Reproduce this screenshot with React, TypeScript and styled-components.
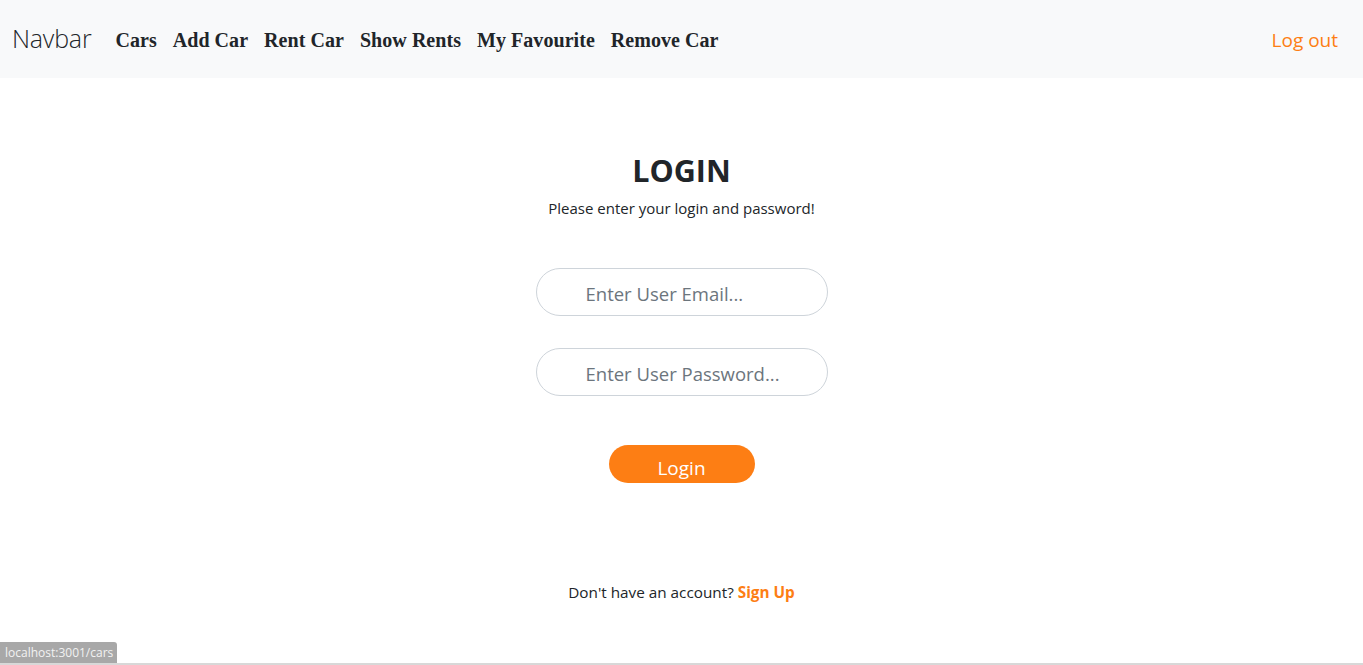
import React from 'react';
import styled, { createGlobalStyle } from 'styled-components';

const GlobalStyle = createGlobalStyle`
  html, body {
    margin: 0;
    padding: 0;
    background: #fff;
    font-family: "Open Sans", "Noto Sans", sans-serif;
    color: #212529;
  }
  * { box-sizing: border-box; }
`;

const Page = styled.div`
  min-height: 665px;
  display: flex;
  flex-direction: column;
`;

const NavBar = styled.nav`
  height: 78px;
  background-color: #f8f9fa;
  display: flex;
  align-items: center;
  padding: 0 25px 0 12px;
`;

const Brand = styled.a`
  font-family: "Open Sans", sans-serif;
  font-size: 25px;
  font-weight: 300;
  color: #212529;
  margin-right: 24px;
  letter-spacing: -0.2px;
  padding-bottom: 2px;
`;

const NavList = styled.div`
  display: flex;
  gap: 16px;
  flex: 1;
  padding-top: 3px;
`;

const NavLink = styled.a`
  font-family: "Liberation Serif", "DejaVu Serif", serif;
  font-weight: bold;
  font-size: 20px;
  letter-spacing: 0.05px;
  color: #212529;
`;

const LogOut = styled.a`
  font-family: "Open Sans", sans-serif;
  font-size: 19px;
  color: #fd7e14;
  padding-top: 2px;
`;

const Main = styled.main`
  display: flex;
  flex-direction: column;
  align-items: center;
  padding-top: 72px;
`;

const Title = styled.h2`
  margin: 0;
  font-size: 30.5px;
  font-weight: 700;
  line-height: 40px;
  color: #212529;
`;

const Subtitle = styled.p`
  margin: 7px 0 0;
  font-size: 15px;
  line-height: 22px;
`;

const Form = styled.form`
  display: flex;
  flex-direction: column;
  align-items: center;
  gap: 32px;
  margin-top: 49px;
`;

const Input = styled.input`
  width: 292px;
  height: 48px;
  border: 1px solid #ced4da;
  border-radius: 24px;
  padding: 3px 20px 0 49px;
  font-family: "Open Sans", sans-serif;
  font-size: 18.5px;
  color: #495057;
  background: #fff;
  &::placeholder {
    color: #6c757d;
  }
`;

const LoginButton = styled.button`
  margin-top: 17px;
  width: 146px;
  height: 38px;
  border: none;
  border-radius: 19px;
  background-color: #fd7e14;
  color: #fff;
  font-family: "Open Sans", sans-serif;
  font-size: 19px;
  padding-top: 9px;
  line-height: 26px;
`;

const Footer = styled.p`
  margin: 98px 0 0;
  font-size: 15.3px;
  line-height: 22px;
`;

const SignUp = styled.a`
  color: #fd7e14;
  font-weight: 700;
`;

const StatusBubble = styled.div`
  position: fixed;
  left: 0;
  bottom: 2px;
  background: #a8a8a8;
  color: #f2f2f2;
  font-family: "Open Sans", sans-serif;
  font-size: 12px;
  padding: 2px 4px 2px 5px;
  border-top-right-radius: 3px;
`;

const BottomLine = styled.div`
  position: fixed;
  left: 0;
  right: 0;
  bottom: 0;
  height: 2px;
  background: #d8d8d8;
`;

export default function App() {
  return (
    <Page>
      <GlobalStyle />
      <NavBar>
        <Brand>Navbar</Brand>
        <NavList>
          <NavLink>Cars</NavLink>
          <NavLink>Add Car</NavLink>
          <NavLink>Rent Car</NavLink>
          <NavLink>Show Rents</NavLink>
          <NavLink>My Favourite</NavLink>
          <NavLink>Remove Car</NavLink>
        </NavList>
        <LogOut>Log out</LogOut>
      </NavBar>
      <Main>
        <Title>LOGIN</Title>
        <Subtitle>Please enter your login and password!</Subtitle>
        <Form onSubmit={(e) => e.preventDefault()}>
          <Input type="email" placeholder="Enter User Email..." />
          <Input type="password" placeholder="Enter User Password..." />
          <LoginButton type="submit">Login</LoginButton>
        </Form>
        <Footer>
          Don't have an account? <SignUp>Sign Up</SignUp>
        </Footer>
      </Main>
      <StatusBubble>localhost:3001/cars</StatusBubble>
      <BottomLine />
    </Page>
  );
}
